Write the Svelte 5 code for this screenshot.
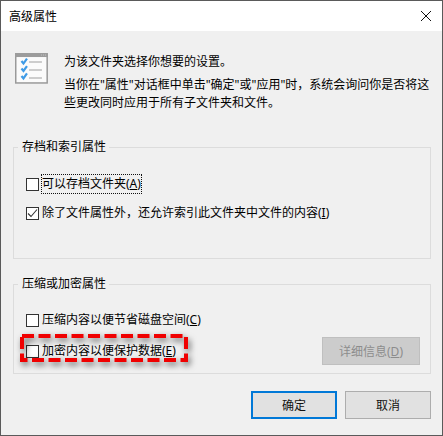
<script lang="ts">
	const archiveRows = [
		{ id: 'archive', label: '可以存档文件夹', key: 'A', checked: false, focus: true },
		{ id: 'index', label: '除了文件属性外\uFF0C还允许索引此文件夹中文件的内容', key: 'I', checked: true, focus: false }
	];
</script>

<div class="window">
	<header class="titlebar">
		<span class="title">高级属性</span>
		<svg class="close" width="12" height="12" viewBox="0 0 12 12" aria-label="关闭">
			<path d="M1 1 L11 11 M11 1 L1 11" stroke="#111" stroke-width="1" fill="none" />
		</svg>
	</header>

	<main class="content">
		<section class="intro">
			<svg class="intro-icon" width="33" height="31" viewBox="0 0 33 31" aria-hidden="true">
				<rect x="0.75" y="1" width="31.5" height="29" fill="#fbfbfb" stroke="#9a9a9a" stroke-width="1.5" />
				<rect x="0" y="0" width="33" height="4" fill="#9c9c9c" />
				<path d="M26 2 H32" stroke="#c8c8c8" stroke-width="1" stroke-dasharray="1 1" />
				<path d="M6.5 8 L8.5 10.5 L12 5.5 M6.5 15.5 L8.5 18 L12 13 M6.5 23 L8.5 25.5 L12 20.5" stroke="#3f9be6" stroke-width="2.2" fill="none" />
				<path d="M14 9 H27 M14 17 H27 M14 25 H27" stroke="#cdcdcd" stroke-width="2" fill="none" />
			</svg>
			<div class="intro-text">
				<p class="lead">为该文件夹选择你想要的设置。</p>
				<p>当你在"属性"对话框中单击"确定"或"应用"时&#xFF0C;系统会询问你是否将这些更改同时应用于所有子文件夹和文件。</p>
			</div>
		</section>

		<fieldset class="group group-archive">
			<legend>存档和索引属性</legend>
			{#each archiveRows as row (row.id)}
				<div class="row">
					<span class="box">
						{#if row.checked}
							<svg width="11" height="11" viewBox="0 0 11 11" aria-hidden="true">
								<path d="M1 5.5 L4 8.5 L10 1.5" stroke="#333" stroke-width="1.1" fill="none" />
							</svg>
						{/if}
					</span>
					<span class="label" class:focus={row.focus}>{row.label}(<u>{row.key}</u>)</span>
				</div>
			{/each}
		</fieldset>

		<fieldset class="group group-compress">
			<legend>压缩或加密属性</legend>
			<div class="row">
				<span class="box"></span>
				<span class="label">压缩内容以便节省磁盘空间(<u>C</u>)</span>
			</div>
			<div class="row row-last">
				<span class="box"></span>
				<span class="label">加密内容以便保护数据(<u>E</u>)</span>
				<button class="btn details" disabled>详细信息(<u>D</u>)</button>
			</div>
			<svg class="marker" width="168" height="28" viewBox="0 0 168 28" aria-hidden="true">
				<rect x="2" y="2" width="164" height="24" fill="none" stroke="#f00000" stroke-width="4" stroke-dasharray="12 4.5" />
			</svg>
		</fieldset>

		<footer class="actions">
			<button class="btn primary">确定</button>
			<button class="btn">取消</button>
		</footer>
	</main>
</div>

<style>
	:global(body) {
		margin: 0;
		background: #5a5a5a;
	}

	.window {
		width: 441px;
		height: 434px;
		margin: 1px 0 0 1px;
		display: flex;
		flex-direction: column;
		background: #f0f0f0;
		font-family: "Noto Sans", "Noto Sans CJK SC", sans-serif;
		font-size: 12px;
		color: #000;
	}

	.titlebar {
		height: 30px;
		flex-shrink: 0;
		background: #fff;
		display: flex;
		align-items: center;
		justify-content: space-between;
		padding: 0 10px 0 8px;
	}

	.content {
		flex: 1;
		display: flex;
		flex-direction: column;
		padding: 0 11px 0 12px;
	}

	.intro {
		display: flex;
		gap: 16px;
		padding: 22px 0 0 2px;
		height: 107px;
		box-sizing: border-box;
	}

	.intro-icon {
		filter: blur(0.35px);
	}

	.intro-text p {
		margin: 0;
		line-height: 18px;
	}

	.intro-text {
		width: 368px;
	}

	.intro-text .lead {
		margin-bottom: 5px;
	}

	.group {
		margin: 0;
		padding: 0 0 0 12px;
		border: 1px solid #dcdcdc;
		box-sizing: border-box;
		position: relative;
		min-width: 0;
	}

	.group legend {
		margin-left: -8px;
		padding: 0 3px 0 4px;
		line-height: 18px;
	}

	.group-archive {
		height: 121px;
		padding-top: 19px;
	}

	.group-compress {
		height: 99px;
		margin-top: 16px;
		padding-top: 18px;
	}

	.row {
		display: flex;
		align-items: center;
		height: 18px;
		margin-bottom: 11px;
	}

	.row-last {
		margin-top: 13px;
		margin-bottom: 0;
	}

	.box {
		width: 11px;
		height: 11px;
		flex-shrink: 0;
		border: 1px solid #333;
		background: #fff;
		display: flex;
	}

	.label {
		margin-left: 3px;
		line-height: 18px;
		white-space: nowrap;
	}

	.label.focus {
		outline: 1px dotted #111;
	}

	.btn {
		height: 28px;
		padding: 0;
		box-sizing: border-box;
		border: 1px solid #adadad;
		background: #e1e1e1;
		font: inherit;
		color: #111;
	}

	.details {
		width: 98px;
		margin-left: auto;
		margin-right: 10px;
		background: #cccccc;
		border: 1px solid #bfbfbf;
		color: #8c8c8c;
	}

	.marker {
		position: absolute;
		left: 6px;
		top: 41px;
		filter: drop-shadow(2px 3px 3px rgba(0, 0, 0, 0.6));
		overflow: visible;
		pointer-events: none;
	}

	.actions {
		display: flex;
		justify-content: flex-end;
		gap: 8px;
		margin-top: 17px;
	}

	.actions .btn {
		width: 86px;
	}

	.actions .primary {
		border: 2px solid #0078d7;
	}
</style>
